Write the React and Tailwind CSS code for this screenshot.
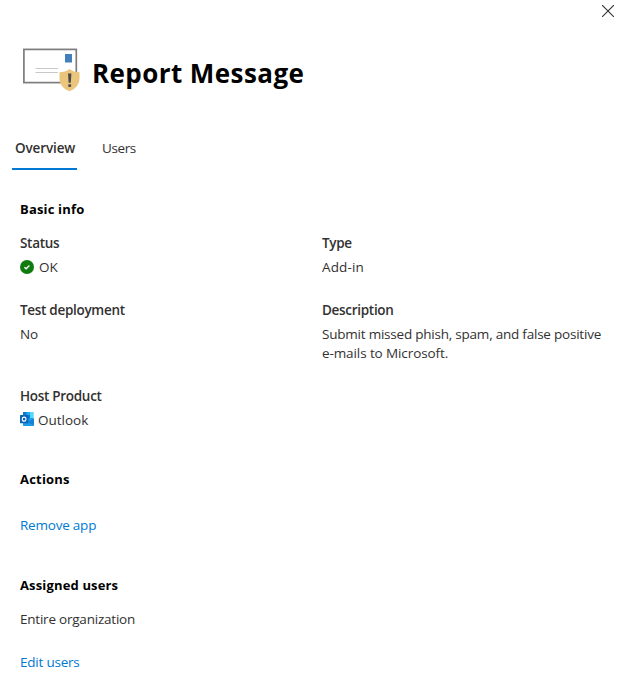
import React from "react";

function MessageIcon() {
  return (
    <svg className="block h-[48px] w-[60px] shrink-0" viewBox="0 0 60 48">
      <rect x="2.900" y="3.400" width="52.400" height="33.200" fill="#fff" stroke="#7d7d7d" strokeWidth="1.700" />
      <rect x="44" y="8" width="7" height="8.500" fill="#4380bb" />
      <path d="M14.500 22.500H37M14.500 26.500H37" stroke="#c9c9c9" strokeWidth="1" />
      <path d="M48.500 23c3 2.200 6.200 3.200 10 3.300v6.200c0 6-4 10.500-10 12.800-6-2.300-10-6.800-10-12.800v-6.200c3.800-.1 7-1.100 10-3.300z" fill="#ecc57c" />
      <path d="M47 27.500h3.400l-.6 9.300h-2.200z" fill="#4a4a4a" />
      <rect x="47.300" y="38.300" width="2.800" height="2.600" fill="#4a4a4a" />
    </svg>
  );
}

function CheckIcon() {
  return (
    <svg className="-mt-0.5 block h-[14px] w-[14px] shrink-0" viewBox="0 0 14 14">
      <circle cx="7" cy="7" r="7" fill="#107c10" />
      <path d="M4.400 7.200l1.700 1.500 3.300-3.200" fill="none" stroke="#fff" strokeWidth="1.400" />
    </svg>
  );
}

function OutlookIcon() {
  return (
    <svg className="-mt-1 block h-[14px] w-[14px] shrink-0" viewBox="0 0 14 14">
      <rect x="3" y="0" width="10.300" height="9" fill="#1490df" />
      <rect x="3" y="0" width="3.600" height="3" fill="#0f78d0" />
      <rect x="6.600" y="0" width="3.400" height="3.300" fill="#28a8ea" />
      <rect x="10" y="0" width="3.300" height="6.300" fill="#50d9ff" />
      <rect x="6.600" y="3.300" width="3.400" height="3" fill="#0078d4" />
      <path d="M3 6.500L14 6.500v6.800c0 .4-.3.700-.7.700H3.700c-.4 0-.7-.3-.7-.7z" fill="#1a9be8" />
      <path d="M7.500 10.300L14 6.500v6.800z" fill="#1583d3" />
      <rect x="0" y="3" width="8.300" height="8.300" rx=".6" fill="#0a64b8" />
      <ellipse cx="4.150" cy="7.150" rx="1.850" ry="2" fill="none" stroke="#fff" strokeWidth="1.100" />
    </svg>
  );
}

function Field({ label, children }) {
  return (
    <div>
      <div className="h-[25px] font-semibold tracking-[-0.3px]">{label}</div>
      <div className="leading-[19px]">{children}</div>
    </div>
  );
}

export default function App() {
  return (
    <main className="relative h-[697px] w-[619px] overflow-hidden bg-white font-['Open_Sans','Noto_Sans',sans-serif] text-[13.5px] leading-5 tracking-[-0.22px] whitespace-nowrap text-[#323130]">
      <button aria-label="Close" className="absolute top-[5px] right-[5px]">
        <svg className="block h-3 w-3" viewBox="0 0 12 12">
          <path d="M0 0l12 12M12 0L0 12" stroke="#323130" strokeWidth="1.100" />
        </svg>
      </button>

      <header className="flex h-[138px] items-start gap-[11px] pt-[46px] pl-[21px]">
        <MessageIcon />
        <h1 className="mt-[9px] text-[26px] leading-9 font-bold tracking-[0.42px] text-black"><span>Report Message</span></h1>
      </header>

      <nav className="flex gap-[22px] pl-3">
        <div className="h-8 w-[65px] border-b-2 border-[#0078d4] pl-[3px] font-semibold tracking-[-0.12px]"><span>Overview</span></div>
        <div className="pl-[3px] tracking-[-0.4px]"><span>Users</span></div>
      </nav>

      <div className="pt-[29px] pl-5">
        <h2 className="text-[13px] font-bold tracking-[0.17px] text-black"><span>Basic info</span></h2>
        <div className="mt-[14px] grid grid-cols-[302px_1fr]">
          <div className="h-[67px]">
            <Field label={<span>Status</span>}>
              <div className="flex items-center gap-[5px] tracking-normal"><CheckIcon /><span>OK</span></div>
            </Field>
          </div>
          <Field label={<span>Type</span>}><span className="tracking-[0.15px]">Add-in</span></Field>
          <div className="h-[86px]">
            <Field label={<span>Test deployment</span>}><span>No</span></Field>
          </div>
          <Field label={<span>Description</span>}>
            <span>Submit missed phish, spam, and false positive</span><br />
            <span className="tracking-[-0.1px]">e-mails to Microsoft.</span>
          </Field>
          <div className="h-[83px]">
            <Field label={<span>Host Product</span>}>
              <div className="flex items-center gap-1 tracking-normal"><OutlookIcon /><span>Outlook</span></div>
            </Field>
          </div>
        </div>

        <h2 className="text-[13px] font-bold tracking-[0.2px] text-black"><span>Actions</span></h2>
        <a className="mt-[26px] block text-[#0078d4]"><span>Remove app</span></a>

        <h2 className="mt-10 text-[13px] font-bold tracking-[0.15px] text-black"><span>Assigned users</span></h2>
        <p className="mt-[14px]"><span>Entire organization</span></p>
        <a className="mt-[23px] block text-[#0078d4]"><span>Edit users</span></a>
      </div>
    </main>
  );
}
